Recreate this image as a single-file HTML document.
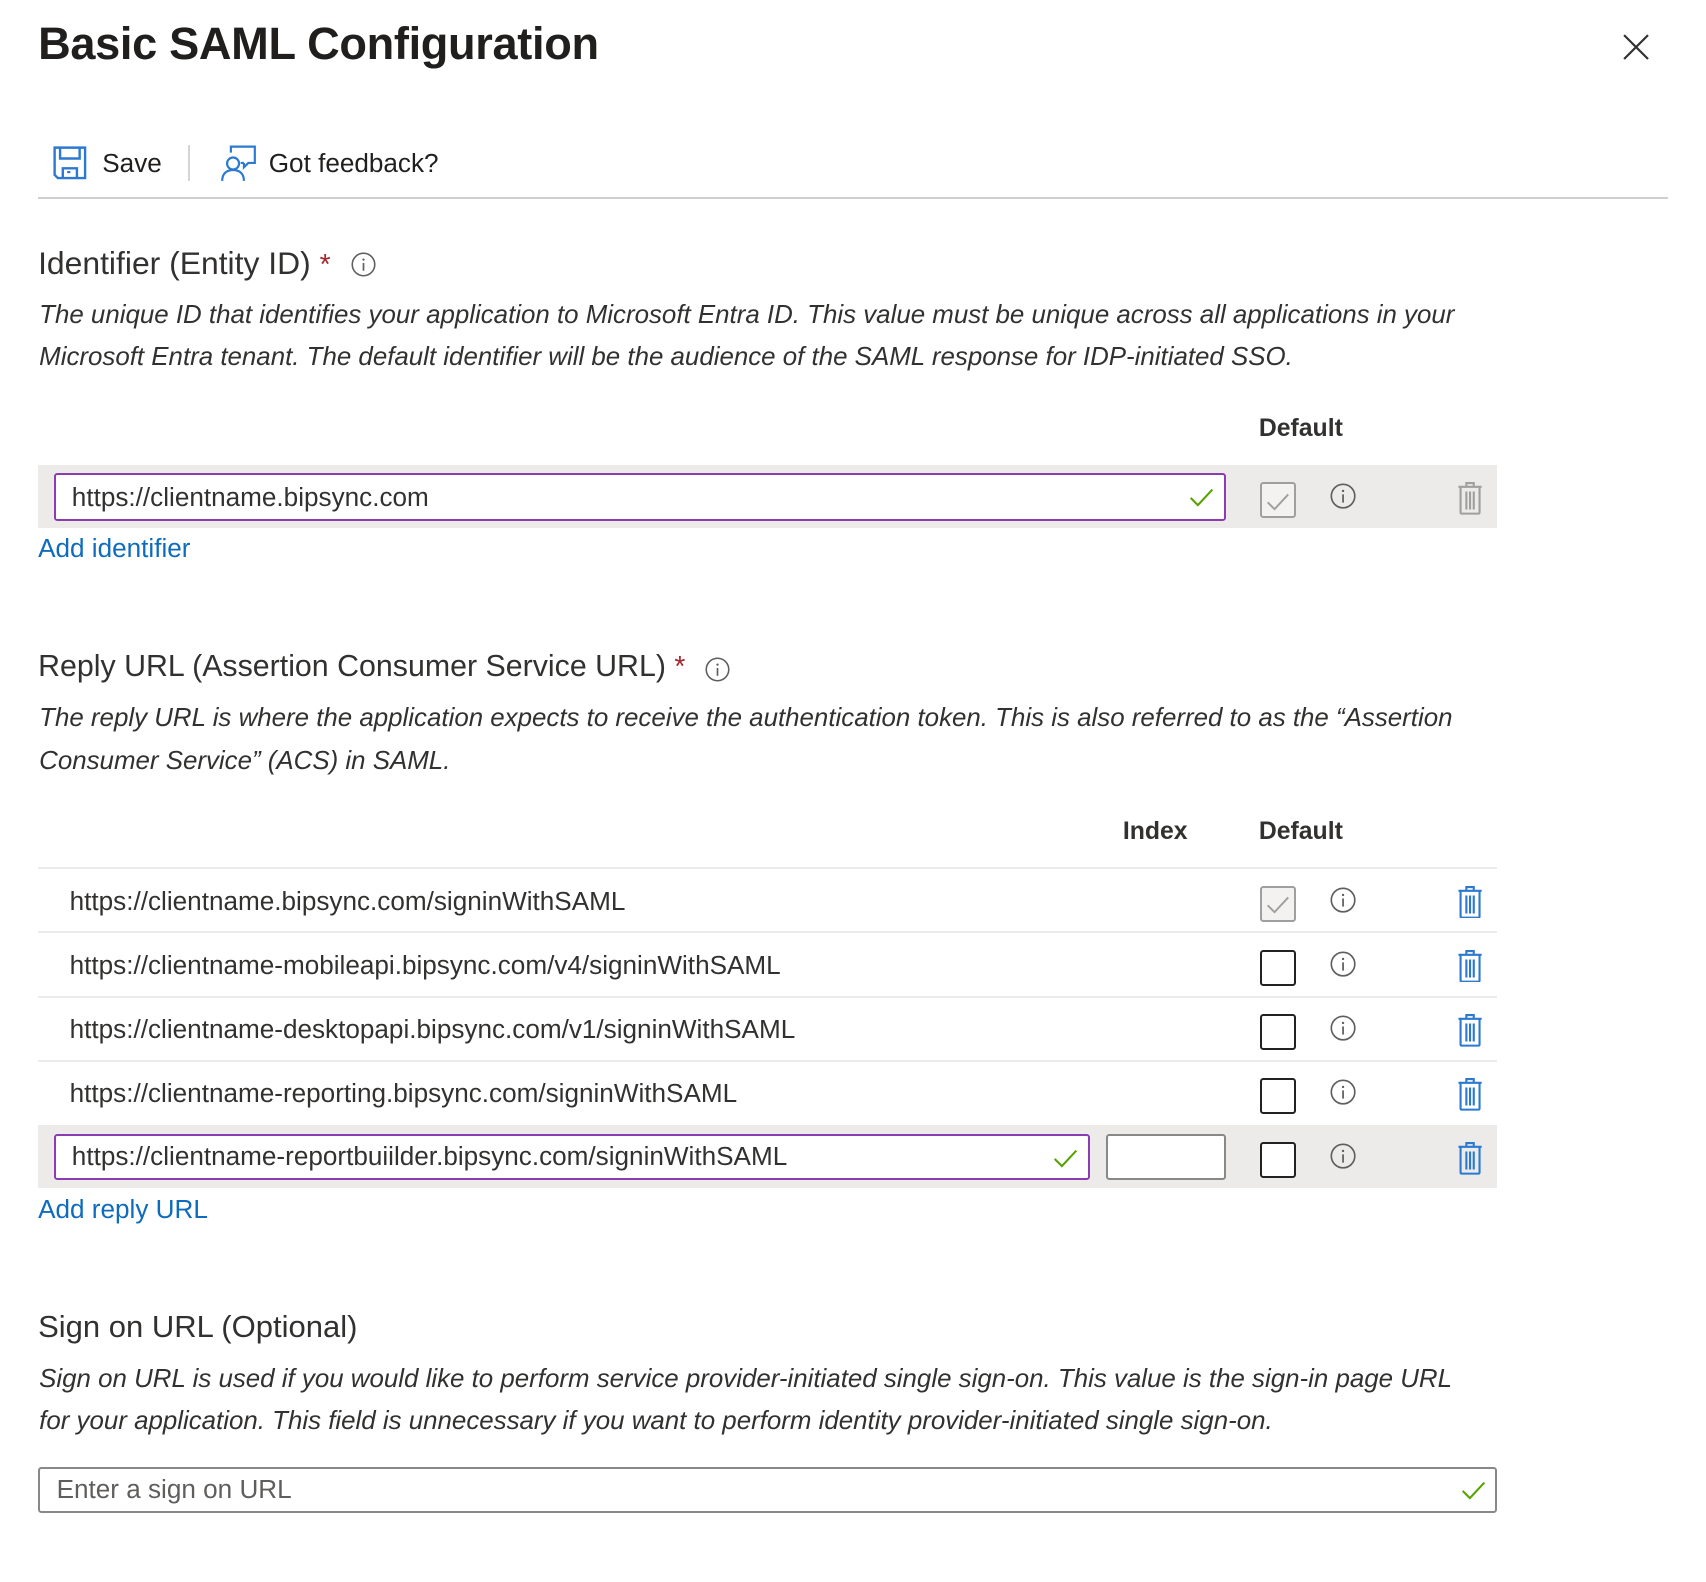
<!DOCTYPE html>
<html><head><meta charset="utf-8">
<style>
html,body{margin:0;padding:0;background:#fff;}
body{width:1706px;height:1582px;overflow:hidden;}
#w{position:relative;width:1568px;height:1454px;zoom:1.088;font-family:"Liberation Sans",sans-serif;color:#323130;}
.a{position:absolute;white-space:nowrap;}
.t{font-size:41.5px;font-weight:bold;color:#201f1e;letter-spacing:-0.3px;}
.h{font-size:28.5px;}
.d{font-size:23.8px;font-style:italic;line-height:39px;}
.b{font-size:22.8px;font-weight:bold;}
.u{font-size:24px;}
.l{font-size:24px;color:#0f6cbd;}
.star{color:#a4262c;font-size:26px;}
.row{position:absolute;left:35px;width:1341px;}
.inp{position:absolute;box-sizing:border-box;border:2px solid #8a3cb0;border-radius:3px;background:#fff;}
.cb{position:absolute;box-sizing:border-box;width:33px;height:33px;border:2px solid #222;border-radius:3px;background:#fff;}
.cb.g{border-color:#a19f9d;background:#f3f2f1;}
.ln{position:absolute;left:35px;width:1341px;height:2px;background:#edebe9;}
</style></head><body><div id="w">
<svg width="0" height="0" style="position:absolute">
<defs>
<symbol id="info" viewBox="0 0 24 24"><circle cx="12" cy="12" r="10.8" fill="none" stroke="#605e5c" stroke-width="1.5"/><circle cx="12" cy="7.3" r="1.1" fill="#605e5c"/><path d="M12 10.5v7.5" stroke="#605e5c" stroke-width="1.6"/></symbol>
<symbol id="trash" viewBox="0 0 24 32"><path d="M1 5.5h22M8.5 5.5V2h7v3.5M3 5.5v24.5a1 1 0 0 0 1 1h16a1 1 0 0 0 1-1V5.5M8.5 10v17M12 10v17M15.5 10v17" fill="none" stroke="currentColor" stroke-width="2"/></symbol>
<symbol id="chk" viewBox="0 0 24 20"><path d="M1.5 10.5l7 7L22.5 2.5" fill="none" stroke="currentColor" stroke-width="2"/></symbol>
</defs></svg>

<div class="a t" style="left:35px;top:17px;">Basic SAML Configuration</div>
<svg class="a" style="left:1492px;top:31px" width="24" height="24" viewBox="0 0 24 24"><path d="M1 1L23 23M23 1L1 23" stroke="#323130" stroke-width="2"/></svg>

<svg class="a" style="left:49px;top:134px" width="31" height="31" viewBox="0 0 31 31"><path d="M1.5 1.5h28v28h-25l-3-3z" fill="none" stroke="#2b79d0" stroke-width="2.2"/><path d="M6.5 1.5v10h18v-10M9 29.5v-9h13v9" fill="none" stroke="#2b79d0" stroke-width="2.2"/><path d="M13 24h3" stroke="#2b79d0" stroke-width="2"/></svg>
<div class="a" style="left:94px;top:136px;font-size:24px;color:#201f1e;">Save</div>
<div class="a" style="left:173px;top:133px;width:2px;height:33px;background:#d5d5d5;"></div>
<svg class="a" style="left:202px;top:133px" width="34" height="34" viewBox="0 0 34 34"><circle cx="12" cy="17" r="5.5" fill="none" stroke="#2b79d0" stroke-width="2"/><path d="M2 33c0-7 4.5-10 10-10s10 3 10 10" fill="none" stroke="#2b79d0" stroke-width="2"/><path d="M10 7V1.5h22v15h-6l-4 4v-4" fill="none" stroke="#2b79d0" stroke-width="2"/><path d="M22 16.5h-3" stroke="#2b79d0" stroke-width="2"/></svg>
<div class="a" style="left:247px;top:136px;font-size:24px;color:#201f1e;">Got feedback?</div>
<div class="a" style="left:35px;top:181px;width:1498px;height:2px;background:#d2d0ce;"></div>

<div class="a h" style="left:35px;top:225px;font-size:29.3px;">Identifier (Entity ID) <span class="star">*</span></div>
<svg class="a" style="left:323px;top:232px" width="23" height="23"><use href="#info"/></svg>
<div class="a d" style="left:36px;top:270px;">The unique ID that identifies your application to Microsoft Entra ID. This value must be unique across all applications in your<br>Microsoft Entra tenant. The default identifier will be the audience of the SAML response for IDP-initiated SSO.</div>
<div class="a b" style="left:1157px;top:381px;">Default</div>
<div class="row" style="top:427px;height:58px;background:#edebe9;"></div>
<div class="inp" style="left:50px;top:435px;width:1077px;height:44px;"></div>
<div class="a u" style="left:66px;top:443px;">https://clientname.bipsync.com</div>
<svg class="a" style="left:1093px;top:448px;color:#57a300" width="23" height="19"><use href="#chk"/></svg>
<div class="cb g" style="left:1158px;top:443px;"></div>
<svg class="a" style="left:1164px;top:452px;color:#a19f9d" width="22" height="18"><use href="#chk"/></svg>
<svg class="a" style="left:1222px;top:444px" width="24" height="24"><use href="#info"/></svg>
<svg class="a" style="left:1339px;top:442px;color:#a19f9d" width="24" height="31"><use href="#trash"/></svg>
<div class="a l" style="left:35px;top:490px;">Add identifier</div>

<div class="a h" style="left:35px;top:597px;font-size:27.9px;">Reply URL (Assertion Consumer Service URL) <span class="star">*</span></div>
<svg class="a" style="left:648px;top:604px" width="23" height="23"><use href="#info"/></svg>
<div class="a d" style="left:36px;top:641px;">The reply URL is where the application expects to receive the authentication token. This is also referred to as the “Assertion<br>Consumer Service” (ACS) in SAML.</div>
<div class="a b" style="left:1032px;top:752px;">Index</div>
<div class="a b" style="left:1157px;top:752px;">Default</div>
<div class="ln" style="top:797px;"></div>
<div class="ln" style="top:856px;"></div>
<div class="ln" style="top:915px;"></div>
<div class="ln" style="top:974px;"></div>

<div class="a u" style="left:64px;top:814px;">https://clientname.bipsync.com/signinWithSAML</div>
<div class="a u" style="left:64px;top:873px;">https://clientname-mobileapi.bipsync.com/v4/signinWithSAML</div>
<div class="a u" style="left:64px;top:932px;">https://clientname-desktopapi.bipsync.com/v1/signinWithSAML</div>
<div class="a u" style="left:64px;top:991px;">https://clientname-reporting.bipsync.com/signinWithSAML</div>

<div class="cb g" style="left:1158px;top:814px;"></div>
<svg class="a" style="left:1164px;top:823px;color:#a19f9d" width="22" height="18"><use href="#chk"/></svg>
<div class="cb" style="left:1158px;top:873px;"></div>
<div class="cb" style="left:1158px;top:932px;"></div>
<div class="cb" style="left:1158px;top:991px;"></div>
<svg class="a" style="left:1222px;top:815px" width="24" height="24"><use href="#info"/></svg>
<svg class="a" style="left:1222px;top:874px" width="24" height="24"><use href="#info"/></svg>
<svg class="a" style="left:1222px;top:933px" width="24" height="24"><use href="#info"/></svg>
<svg class="a" style="left:1222px;top:992px" width="24" height="24"><use href="#info"/></svg>
<svg class="a" style="left:1339px;top:813px;color:#2b79d0" width="24" height="31"><use href="#trash"/></svg>
<svg class="a" style="left:1339px;top:872px;color:#2b79d0" width="24" height="31"><use href="#trash"/></svg>
<svg class="a" style="left:1339px;top:931px;color:#2b79d0" width="24" height="31"><use href="#trash"/></svg>
<svg class="a" style="left:1339px;top:990px;color:#2b79d0" width="24" height="31"><use href="#trash"/></svg>

<div class="row" style="top:1034px;height:58px;background:#edebe9;"></div>
<div class="inp" style="left:50px;top:1042px;width:952px;height:43px;"></div>
<div class="a u" style="left:66px;top:1049px;">https://clientname-reportbuiilder.bipsync.com/signinWithSAML</div>
<svg class="a" style="left:968px;top:1055px;color:#57a300" width="23" height="19"><use href="#chk"/></svg>
<div class="inp" style="left:1017px;top:1042px;width:110px;height:43px;border-color:#8a8886;"></div>
<div class="cb" style="left:1158px;top:1050px;"></div>
<svg class="a" style="left:1222px;top:1051px" width="24" height="24"><use href="#info"/></svg>
<svg class="a" style="left:1339px;top:1049px;color:#2b79d0" width="24" height="31"><use href="#trash"/></svg>
<div class="a l" style="left:35px;top:1097px;">Add reply URL</div>

<div class="a h" style="left:35px;top:1203px;">Sign on URL (Optional)</div>
<div class="a d" style="left:36px;top:1248px;">Sign on URL is used if you would like to perform service provider-initiated single sign-on. This value is the sign-in page URL<br>for your application. This field is unnecessary if you want to perform identity provider-initiated single sign-on.</div>
<div class="inp" style="left:35px;top:1348px;width:1341px;height:43px;border-color:#8a8886;"></div>
<div class="a u" style="left:52px;top:1355px;color:#605e5c;">Enter a sign on URL</div>
<svg class="a" style="left:1343px;top:1360px;color:#57a300" width="23" height="19"><use href="#chk"/></svg>
</div></body></html>
